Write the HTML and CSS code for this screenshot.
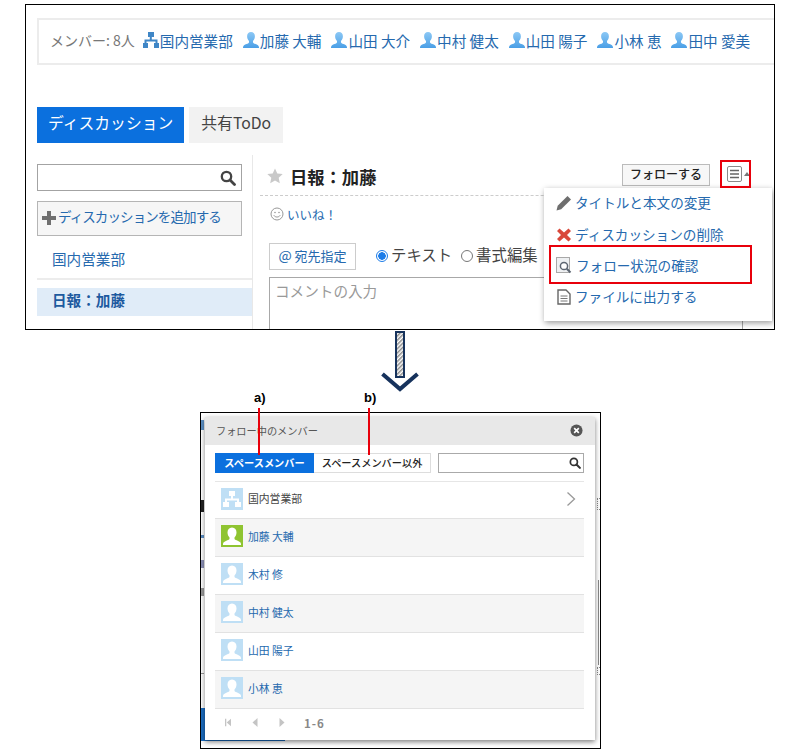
FILE: index.html
```html
<!DOCTYPE html>
<html lang="ja">
  <head>
    <meta charset="UTF-8" />
    <title>フォロー状況の確認</title>
    <link rel="stylesheet" href="styles.css">
  </head>

  <body>
    <svg class="defs" width="0" height="0">
      <defs>
        <linearGradient id="userfill" x1="0" y1="0" x2="0" y2="1">
          <stop offset="0" stop-color="#8cc8f5" />
          <stop offset="1" stop-color="#4a9fe6" />
        </linearGradient>
        <symbol id="user" viewBox="0 0 18 18">
          <path fill="url(#userfill)" d="M9 1c2.500 0 3.900 1.900 3.900 4.300 0 1.900-.8 3.600-1.900 4.600v1.300c0 .8 1 1.200 2.500 1.800 1.900.7 3.500 1.500 3.500 3.400v.6H1v-.6c0-1.900 1.600-2.700 3.500-3.400C6 12.400 7 12 7 11.200V9.900C5.900 8.900 5.100 7.200 5.100 5.300 5.100 2.900 6.500 1 9 1z" />
        </symbol>
        <symbol id="org" viewBox="0 0 18 18">
          <path fill="#3f86c6" d="M6 1h6v5H9.800v2.500H15.500V12H17v5h-5v-5h1.500V10.500h-9V12H6v5H1v-5h1.500V8.500h5.300V6H6z" />
        </symbol>
        <symbol id="photo" viewBox="0 0 22 22">
          <path fill="#fff" d="M11 2.500c3 0 4.500 2.200 4.500 4.900 0 2.200-1 4-2 5v1.300c0 .7 1 1.100 2.600 1.700 2.100.8 3.900 1.700 3.900 3.600v1H2v-1c0-1.900 1.800-2.800 3.900-3.600 1.600-.6 2.600-1 2.600-1.700v-1.300c-1-1-2-2.800-2-5 0-2.700 1.500-4.900 4.500-4.900z" />
        </symbol>
      </defs>
    </svg>

    <div class="shot shot-top">
      <div class="members">
        <span class="count">メンバー: 8人</span>
        <a class="who"><svg class="ico"><use href="#org" /></svg>国内営業部</a>
        <a class="who"><svg class="ico"><use href="#user" /></svg>加藤 大輔</a>
        <a class="who"><svg class="ico"><use href="#user" /></svg>山田 大介</a>
        <a class="who"><svg class="ico"><use href="#user" /></svg>中村 健太</a>
        <a class="who"><svg class="ico"><use href="#user" /></svg>山田 陽子</a>
        <a class="who"><svg class="ico"><use href="#user" /></svg>小林 恵</a>
        <a class="who"><svg class="ico"><use href="#user" /></svg>田中 愛美</a>
      </div>

      <div class="tabs">
        <span class="tab on">ディスカッション</span>
        <span class="tab">共有ToDo</span>
      </div>

      <div class="main">
        <div class="side">
          <div class="side-search">
            <svg class="glass" viewBox="0 0 16 16" width="16" height="16">
              <circle cx="6.500" cy="6.500" r="4.700" fill="none" stroke="#444" stroke-width="2.300" />
              <path d="M10 10l4.500 4.500" stroke="#444" stroke-width="2.800" stroke-linecap="round" />
            </svg>
          </div>
          <div class="add-btn">
            <svg viewBox="0 0 14 14" width="14" height="14">
              <path fill="#707070" d="M5 0h4v5h5v4H9v5H5V9H0V5h5z" />
            </svg>
            <span>ディスカッションを追加する</span>
          </div>
          <div class="side-item">国内営業部</div>
          <div class="side-item sel">日報：加藤</div>
        </div>

        <div class="content">
          <div class="head">
            <svg viewBox="0 0 16 16" width="16" height="16">
              <path fill="#c9c9c9" d="M8 .5l2.300 5 5.400.6-4 3.700 1.100 5.400L8 12.500l-4.800 2.700 1.100-5.400-4-3.700 5.400-.6z" />
            </svg>
            <span class="title">日報：加藤</span>
            <span class="follow">フォローする</span>
            <span class="opts">
              <svg viewBox="0 0 15 16" width="15" height="16">
                <rect x=".5" y=".5" width="14" height="15" rx="1.500" fill="#fff" stroke="#8a8a8a" />
                <path d="M3 4.500h9M3 8h9M3 11.500h9" stroke="#666" stroke-width="1.300" />
              </svg>
              <i class="caret"></i>
            </span>
          </div>
          <div class="likes">
            <svg viewBox="0 0 14 14" width="14" height="14">
              <circle cx="7" cy="7" r="6" fill="none" stroke="#999" />
              <circle cx="5" cy="5.500" r=".8" fill="#999" />
              <circle cx="9" cy="5.500" r=".8" fill="#999" />
              <path d="M3.800 8.300c1.500 2.300 4.900 2.300 6.400 0" fill="none" stroke="#999" />
            </svg>
            <a>いいね！</a>
          </div>
          <div class="compose">
            <span class="at"><b>@</b> 宛先指定</span>
            <span class="radio on"></span><span class="rlabel">テキスト</span>
            <span class="radio"></span><span class="rlabel">書式編集</span>
          </div>
          <div class="comment">コメントの入力</div>
        </div>
      </div>

      <div class="menu">
        <a class="menu-item">
          <svg viewBox="0 0 16 16" width="16" height="16">
            <path fill="#6e6e6e" d="M11.500 1l3.500 3.500-9.800 9.800L0.500 15.500l1.200-4.700z" />
          </svg>
          タイトルと本文の変更
        </a>
        <a class="menu-item">
          <svg viewBox="0 0 16 16" width="16" height="16">
            <path fill="#d9483b" d="M3.500 1.500L8 5.500l4.500-4 2.500 2.500-4 4 4 4-2.500 2.500-4.500-4-4.500 4L1 12l4-4-4-4z" />
          </svg>
          ディスカッションの削除
        </a>
        <a class="menu-item">
          <svg viewBox="0 0 17 17" width="17" height="17">
            <rect x=".5" y=".5" width="13" height="15" fill="#eef0f2" stroke="#a8a8a8" />
            <circle cx="8" cy="9" r="3.600" fill="#fff" stroke="#5d6672" stroke-width="1.500" />
            <path d="M10.800 11.800l3.700 3.700" stroke="#5d6672" stroke-width="2" />
          </svg>
          フォロー状況の確認
        </a>
        <a class="menu-item">
          <svg viewBox="0 0 16 16" width="16" height="16">
            <path fill="#fff" stroke="#666" stroke-width="1.400" d="M2 1h8l4 4v10H2z" />
            <path d="M4.500 7h7M4.500 9.500h7M4.500 12h7" stroke="#777" />
          </svg>
          ファイルに出力する
        </a>
      </div>

      <div class="mark mark-opts"></div>
      <div class="mark mark-item"></div>
    </div>

    <svg class="arrow" viewBox="0 0 40 62" width="40" height="62">
      <defs>
        <pattern id="hatch" width="3" height="3" patternUnits="userSpaceOnUse" patternTransform="rotate(45)">
          <rect width="3" height="3" fill="#fff" />
          <rect width="1.500" height="3" fill="#8a8a8a" />
        </pattern>
      </defs>
      <rect x="16" y="1" width="8" height="45" fill="url(#hatch)" stroke="#16325c" stroke-width="2" />
      <path d="M2.500 43L20 58 37.500 43" fill="none" stroke="#16325c" stroke-width="4" />
    </svg>

    <div class="figure">
      <b class="note note-a">a)</b>
      <b class="note note-b">b)</b>

      <div class="shot shot-bottom">
        <!-- bits of the page that show round the dialog -->
        <i class="bit bit-dark"></i>
        <i class="bit bit-link1"></i>
        <i class="bit bit-link2"></i>
        <i class="bit bit-link3"></i>
        <i class="bit bit-gray1"></i>
        <i class="bit bit-gray2"></i>
        <i class="bit bit-blue"></i>
        <i class="bit bit-box1"></i>
        <i class="bit bit-box2"></i>
        <i class="bit bit-line"></i>

        <div class="dialog">
          <div class="dlg-head">
            <span>フォロー中のメンバー</span>
            <svg viewBox="0 0 14 14" width="13" height="13">
              <circle cx="7" cy="7" r="6.500" fill="#555" />
              <path d="M4.500 4.500l5 5M9.500 4.500l-5 5" stroke="#fff" stroke-width="1.800" />
            </svg>
          </div>
          <div class="dlg-tools">
            <span class="seg on">スペースメンバー</span>
            <span class="seg">スペースメンバー以外</span>
            <span class="dlg-search">
              <svg viewBox="0 0 16 16" width="12" height="12">
                <circle cx="6.500" cy="6.500" r="4.700" fill="none" stroke="#333" stroke-width="2.300" />
                <path d="M10 10l4.500 4.500" stroke="#333" stroke-width="2.800" stroke-linecap="round" />
              </svg>
            </span>
          </div>
          <ul class="rows">
            <li class="row">
              <span class="pic">
                <svg viewBox="0 0 22 22" width="22" height="22">
                  <path fill="#fff" d="M8 3h6v5h-2v2.500h6V14h2v5h-6v-5h2v-1.500H6V14h2v5H2v-5h2v-3.500h6V8H8z" />
                </svg>
              </span>
              <span class="plain">国内営業部</span>
              <svg class="chev" viewBox="0 0 10 16" width="10" height="16">
                <path d="M1.500 1.500L8.500 8l-7 6.500" fill="none" stroke="#999" stroke-width="1.300" />
              </svg>
            </li>
            <li class="row alt">
              <span class="pic me"><svg width="22" height="22"><use href="#photo" /></svg></span>
              <a>加藤 大輔</a>
            </li>
            <li class="row">
              <span class="pic"><svg width="22" height="22"><use href="#photo" /></svg></span>
              <a>木村 修</a>
            </li>
            <li class="row alt">
              <span class="pic"><svg width="22" height="22"><use href="#photo" /></svg></span>
              <a>中村 健太</a>
            </li>
            <li class="row">
              <span class="pic"><svg width="22" height="22"><use href="#photo" /></svg></span>
              <a>山田 陽子</a>
            </li>
            <li class="row alt">
              <span class="pic"><svg width="22" height="22"><use href="#photo" /></svg></span>
              <a>小林 恵</a>
            </li>
          </ul>
          <div class="pager">
            <svg viewBox="0 0 7 9" width="6" height="9"><path fill="#c4c4c4" d="M0 0h1.500v9H0zM7 0v9L2 4.500z" /></svg>
            <svg viewBox="0 0 5 9" width="6" height="9"><path fill="#c4c4c4" d="M5 0v9L0 4.500z" /></svg>
            <svg viewBox="0 0 5 9" width="6" height="9"><path fill="#c4c4c4" d="M0 0v9l5-4.500z" /></svg>
            <span>1-6</span>
          </div>
        </div>
      </div>

      <i class="lead lead-a"></i>
      <i class="lead lead-b"></i>
    </div>
  </body>
</html>
```

FILE: styles.css
```css
* {
  margin: 0;
  padding: 0;
  box-sizing: border-box;
}

html,
body {
  height: 749px;
  overflow: hidden;
}

body {
  background: #fff;
  color: #333;
  font-family: "Noto Sans CJK JP", "Noto Sans", sans-serif;
}

a {
  color: #2569ae;
}

.defs {
  position: absolute;
}

.shot {
  position: relative;
  overflow: hidden;
  background: #fff;
  border: 1px solid #000;
}

.shot-top {
  width: 750px;
  height: 326px;
  margin: 4px 0 0 25px;
}

/* member strip */
.members {
  display: flex;
  align-items: center;
  gap: 9px;
  height: 47px;
  margin: 13px 0 0 11px;
  padding: 0 0 3px 11px;
  font-size: 14.600px;
  white-space: nowrap;
  border: 2px solid #ececec;
  border-right: 0;
}

.count {
  color: #777;
  font-size: 14px;
  margin-right: -2px;
}

.who {
  display: flex;
  align-items: center;
}

.ico {
  width: 18px;
  height: 18px;
}

/* tabs */
.tabs {
  display: flex;
  gap: 5px;
  height: 36px;
  margin: 42px 0 0 11px;
}

.tab {
  display: flex;
  align-items: center;
  padding: 0 11px 5px;
  font-size: 15.800px;
  color: #444;
  background: #f2f2f2;
}

.tab + .tab {
  padding: 0 12px 5px;
}

.tab.on {
  color: #fff;
  background: #0b70de;
}

/* two columns */
.main {
  display: flex;
  height: 180px;
  margin: 12px 0 0 11px;
}

.side {
  width: 215px;
  flex: none;
  padding-top: 9px;
}

.side-search {
  display: flex;
  align-items: center;
  justify-content: flex-end;
  width: 205px;
  height: 27px;
  padding-right: 5px;
  border: 1px solid #a3a3a3;
}

.add-btn {
  display: flex;
  align-items: center;
  gap: 2px;
  width: 205px;
  height: 35px;
  margin-top: 10px;
  padding: 0 0 2px 4px;
  font-size: 13.500px;
  letter-spacing: -0.900px;
  color: #2569ae;
  background: #f6f6f6;
  border: 1px solid #b5b5b5;
}

.add-btn span {
  margin-top: -3px;
}

.side-item {
  padding-left: 15px;
  font-size: 14.600px;
  color: #2569ae;
  height: 44px;
  line-height: 46px;
  border-bottom: 2px solid #ececec;
}

.side-item.sel {
  height: 28px;
  margin-top: 8px;
  line-height: 23px;
  font-weight: 700;
  color: #1d5a9f;
  background: #e0ecf8;
  border: 0;
}

.content {
  flex: 1;
  min-width: 0;
  padding-left: 16px;
  border-left: 1px solid #e8e8e8;
}

.head {
  display: flex;
  align-items: center;
  gap: 7px;
  height: 41px;
  margin: 0 30px 0 -9px;
  padding: 2px 0 0 7px;
  border-bottom: 1px dashed #ccc;
}

.title {
  font-size: 17.300px;
  font-weight: 700;
  color: #222;
}

.follow {
  margin-left: auto;
  margin-top: -2px;
  padding: 0 7px;
  width: 88px;
  height: 22px;
  line-height: 17px;
  font-size: 12px;
  font-weight: 500;
  color: #222;
  background: #f7f7f7;
  border: 1.500px solid #bbb;
}

.opts {
  display: flex;
  align-items: center;
  gap: 2px;
  margin: -4px -6px 0 10px;
}

.caret {
  width: 0;
  height: 0;
  border: 3px solid transparent;
  border-top: 0;
  border-bottom: 4px solid #777;
}

.likes {
  display: flex;
  align-items: center;
  gap: 3px;
  height: 28px;
  margin: 4px 0 0 1px;
  font-size: 12.500px;
}

.compose {
  display: flex;
  align-items: center;
  height: 27px;
  margin-top: 15px;
  font-size: 15.400px;
  color: #444;
}

.at {
  width: 87px;
  height: 27px;
  line-height: 22px;
  text-align: center;
  font-size: 13px;
  color: #2569ae;
  border: 1.500px solid #ccc;
  margin-right: 20px;
}

.at b {
  font-weight: 400;
  font-size: 14px;
}

.radio {
  width: 12px;
  height: 12px;
  border-radius: 50%;
  border: 1px solid #777;
  margin: 0 3px 2px 0;
}

.radio.on {
  border: 1.500px solid #1c7ce8;
  background: radial-gradient(circle, #1c7ce8 0 3.500px, #fff 4px);
}

.rlabel {
  margin-right: 9px;
  padding-bottom: 5px;
}

.comment {
  width: 474px;
  height: 80px;
  margin-top: 7px;
  padding: 2px 5px;
  font-size: 14.600px;
  color: #999;
  border: 1.500px solid #a8a8a8;
}

/* popup menu */
.menu {
  position: absolute;
  left: 518px;
  top: 183px;
  width: 228px;
  height: 133px;
  background: #fff;
  box-shadow: 1px 2px 6px rgba(0, 0, 0, 0.4);
}

.menu-item {
  display: flex;
  align-items: center;
  gap: 3px;
  height: 31px;
  padding: 0 0 2px 12px;
  font-size: 13.600px;
  line-height: 1;
}

.menu-item + .menu-item {
  padding-bottom: 0;
}

.mark {
  position: absolute;
  border: 2px solid #e8000b;
}

.mark-opts {
  left: 694px;
  top: 155px;
  width: 31px;
  height: 28px;
}

.mark-item {
  left: 523px;
  top: 240px;
  width: 203px;
  height: 39px;
}

/* arrow between the two shots */
.arrow {
  display: block;
  margin: 1px 0 0 380px;
}

/* lower shot */
.figure {
  position: relative;
  height: 356px;
}

.note {
  position: absolute;
  top: -3px;
  font: 700 13px "Liberation Sans", sans-serif;
  color: #000;
}

.note-a {
  left: 254px;
}

.note-b {
  left: 364px;
}

.lead {
  position: absolute;
  top: 15px;
  width: 2px;
  height: 47px;
  background: #e8000b;
}

.lead-a {
  left: 258px;
}

.lead-b {
  left: 368px;
}

.shot-bottom {
  position: absolute;
  left: 200px;
  top: 19px;
  width: 401px;
  height: 337px;
}

.bit {
  position: absolute;
}

.bit-dark {
  left: 0;
  top: 87px;
  width: 3px;
  height: 12px;
  background: #222;
}

.bit-link1 {
  left: 0;
  top: 7px;
  width: 3px;
  height: 10px;
  background: #5b8fc4;
}

.bit-link2 {
  left: 0;
  top: 122px;
  width: 3px;
  height: 3px;
  background: #5b8fc4;
}

.bit-link3 {
  left: 0;
  top: 147px;
  width: 3px;
  height: 8px;
  background: #8a8fb5;
}

.bit-gray1 {
  left: 0;
  top: 175px;
  width: 3px;
  height: 8px;
  background: #999;
}

.bit-gray2 {
  left: 0;
  top: 260px;
  width: 3px;
  height: 1px;
  background: #999;
}

.bit-blue {
  left: 0;
  top: 295px;
  width: 84px;
  height: 33px;
  background: #1a6cc0;
}

.bit-box1 {
  right: 0;
  top: 85px;
  width: 3px;
  height: 12px;
  border: 1px dotted #888;
  border-right: 0;
}

.bit-box2 {
  right: 0;
  top: 254px;
  width: 3px;
  height: 8px;
  border: 1px dotted #888;
  border-right: 0;
}

.bit-line {
  right: 1px;
  top: 167px;
  width: 1px;
  height: 85px;
  background: #888;
}

.dialog {
  position: absolute;
  left: 4px;
  top: 4px;
  width: 390px;
  height: 323px;
  background: #fff;
  box-shadow: 0 2px 5px rgba(0, 0, 0, 0.5);
}

.dlg-head {
  display: flex;
  align-items: center;
  justify-content: space-between;
  height: 28px;
  padding: 0 12px 1px 11px;
  font-size: 10.200px;
  color: #555;
  background: #e8e8e8;
}

.dlg-tools {
  display: flex;
  height: 20px;
  margin: 8px 11px 8px 10px;
  font-size: 10.200px;
}

.seg {
  display: flex;
  align-items: center;
  justify-content: center;
  width: 99px;
  padding-bottom: 2px;
  color: #222;
  border: 1px solid #ddd;
  white-space: nowrap;
}

.seg + .seg {
  width: 117px;
  font-weight: 500;
  border-left: 0;
}

.seg.on {
  color: #fff;
  font-weight: 700;
  background: #0b70de;
  border-color: #0b70de;
}

.dlg-search {
  display: flex;
  align-items: center;
  justify-content: flex-end;
  flex: 1;
  margin-left: 7px;
  padding-right: 2px;
  border: 1px solid #aaa;
}

.rows {
  list-style: none;
  margin: 0 11px 0 10px;
  border-top: 1px solid #e6e6e6;
}

.row {
  display: flex;
  align-items: center;
  height: 38px;
  padding: 0 0 3px 6px;
  font-size: 10.800px;
  border-bottom: 1px solid #e2e2e2;
}

.row:first-child {
  height: 37px;
}

.row.alt {
  background: #f5f5f5;
}

.row a,
.plain {
  margin-top: -1px;
}

.pic {
  display: block;
  width: 22px;
  height: 22px;
  margin-right: 5px;
  background: #bfdff5;
}

.pic.me {
  background: #8fc431;
}

.plain {
  color: #444;
}

.chev {
  margin-left: auto;
  margin-right: 8px;
}

.pager {
  display: flex;
  align-items: center;
  gap: 21px;
  height: 28px;
  padding: 0 0 1px 20px;
  font-size: 11.500px;
  font-weight: 700;
  letter-spacing: 1px;
  color: #888;
}

.pager span {
  margin-left: -2px;
}
```
